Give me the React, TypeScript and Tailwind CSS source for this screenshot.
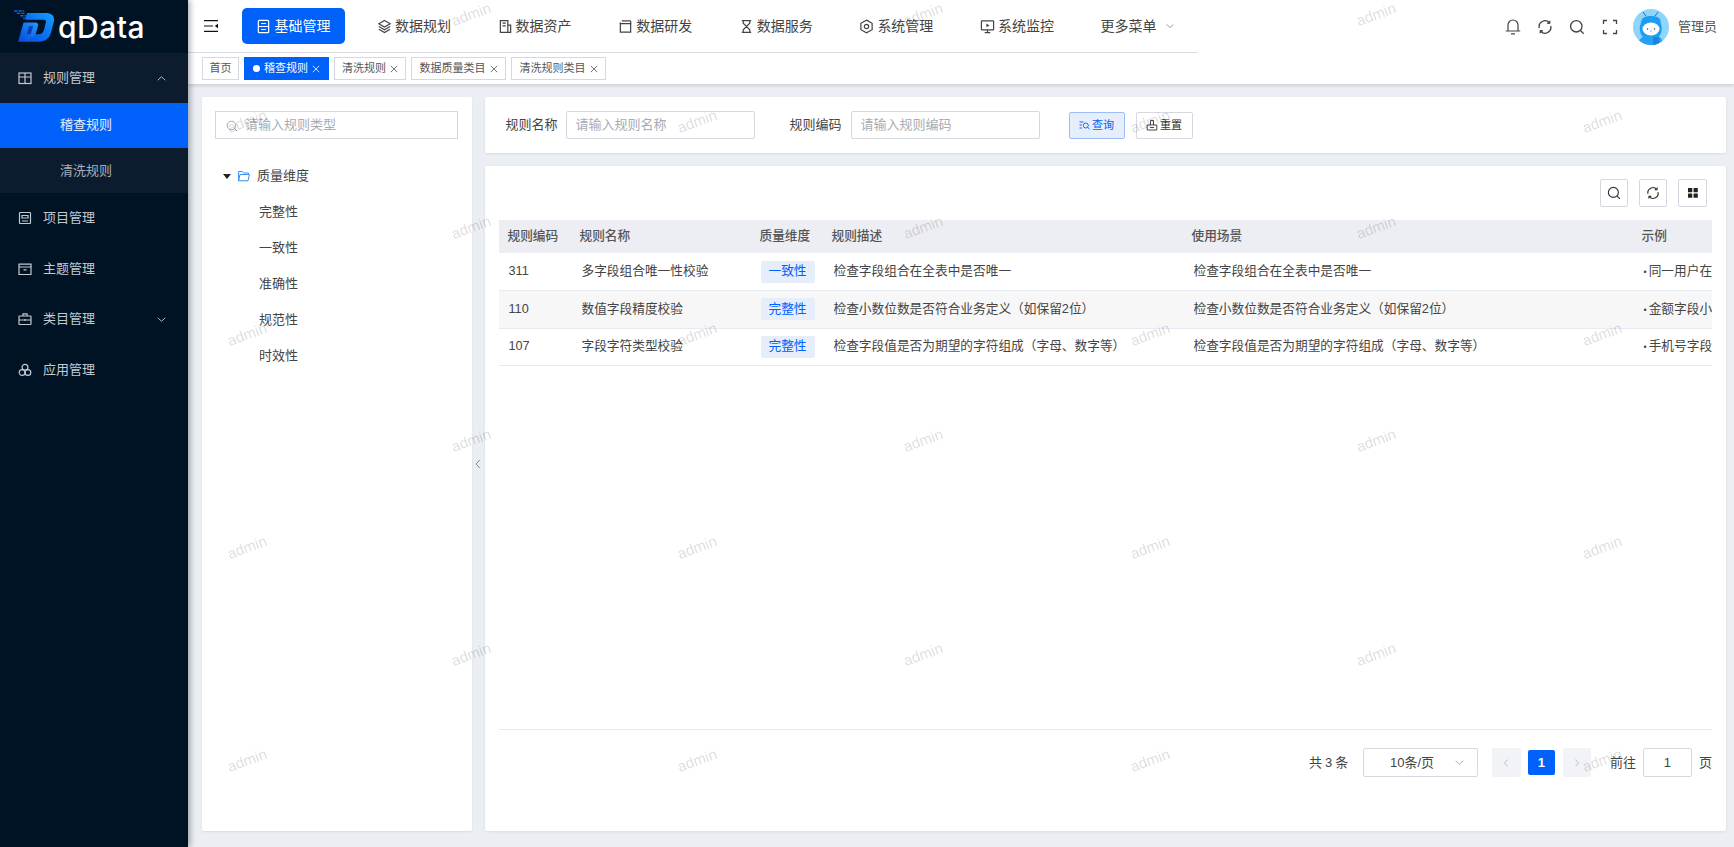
import React from "react";

type IconProps = { className?: string };
const S = ({ className, children, size = 16 }: { className?: string; children: React.ReactNode; size?: number }) => (
  <svg width={size} height={size} viewBox="0 0 16 16" fill="none" stroke="currentColor" strokeWidth="1.3" className={className}>
    {children}
  </svg>
);

const IconBase = ({ className }: IconProps) => (
  <S className={className}>
    <rect x="2.5" y="1.500" width="11" height="13" rx="1" />
    <path d="M5.500 4.800h5M2.500 8h11M5.500 11.200h5" />
  </S>
);
const IconLayers = ({ className }: IconProps) => (
  <S className={className}>
    <path d="M8 1.500 14 5 8 8.500 2 5Z" />
    <path d="M2 8l6 3.500L14 8M2 11l6 3.500L14 11" />
  </S>
);
const IconAsset = ({ className }: IconProps) => (
  <S className={className}>
    <path d="M2.500 1.800h8v12.400h-8Z" />
    <path d="M10.500 6.500h3v7.700h-3M4.800 4.500h3.500M4.800 7.300h3.500" />
  </S>
);
const IconDev = ({ className }: IconProps) => (
  <S className={className}>
    <path d="M4 2h9.500M2.500 5h11v9h-11Z" />
    <path d="M2.500 5V3.800M13.500 2v3" />
  </S>
);
const IconHourglass = ({ className }: IconProps) => (
  <S className={className}>
    <path d="M3 1.800h10M3 14.200h10M4.500 1.800v2.700l7 7v2.700M11.500 1.800v2.700l-7 7v2.700" />
  </S>
);
const IconHex = ({ className }: IconProps) => (
  <S className={className}>
    <path d="M8 1.200 14 4.600v6.800l-6 3.400-6-3.400V4.600Z" />
    <circle cx="8" cy="8" r="2.300" />
  </S>
);
const IconMonitor = ({ className }: IconProps) => (
  <S className={className}>
    <rect x="1.500" y="2" width="13" height="9.500" rx=".6" />
    <path d="M8 11.500V14.500M5 14.500h6" />
    <path d="M6.800 4.700 10.200 6.800 6.800 8.900Z" fill="currentColor" stroke="none" />
  </S>
);
const IconRefresh = ({ className, size = 16 }: IconProps & { size?: number }) => (
  <S className={className} size={size}>
    <path d="M2.300 9A5.800 5.800 0 0 1 12.300 3.800" />
    <path d="M13.700 7A5.800 5.800 0 0 1 3.700 12.200" />
    <path d="M12.800 1.700 12.600 4.300 10 4.100M3.200 14.300 3.400 11.700 6 11.900" />
  </S>
);
const IconSearch = ({ className, size = 16 }: IconProps & { size?: number }) => (
  <S className={className} size={size}>
    <circle cx="7.300" cy="7.300" r="5.700" />
    <path d="m11.500 11.500 3.200 3.200" />
  </S>
);
const Chevron = ({ className, dir = "down" }: IconProps & { dir?: "down" | "up" | "left" | "right" }) => {
  const d = { down: "M2.500 5.500 8 10.500l5.500-5", up: "M2.500 10.500 8 5.500l5.500 5", left: "M10.500 2.500 5.500 8l5 5.500", right: "M5.500 2.500 10.500 8l-5 5.500" }[dir];
  return <S className={className}><path d={d} /></S>;
};
const IconX = ({ className }: IconProps) => (
  <svg width="8" height="8" viewBox="0 0 8 8" fill="none" stroke="currentColor" strokeWidth=".8" className={className}>
    <path d="m.8.800 6.400 6.400M7.200.800.800 7.200" />
  </svg>
);

const Logo = () => (
  <svg width="41" height="33" viewBox="0 0 120 95" className="shrink-0">
    <defs>
      <linearGradient id="lg" x1="0" y1="1" x2="1" y2="0">
        <stop offset="0" stopColor="#0a4fe0" />
        <stop offset="0.55" stopColor="#0d78f5" />
        <stop offset="1" stopColor="#18a0ff" />
      </linearGradient>
      <linearGradient id="lg2" x1="0" y1="1" x2="1" y2="0">
        <stop offset="0" stopColor="#0646d8" />
        <stop offset="1" stopColor="#1e9cff" />
      </linearGradient>
    </defs>
    <path d="M38 8H92C112 8 121 18 116 36L108 66C103 84 90 92 72 92H46L52 70H72C80 70 85 66 87 59L93 37C95 31 92 28 86 28H33Z" fill="url(#lg)" />
    <path d="M28 36H62C70 36 72 40 70 47L64 68C61 76 57 80 50 80L46 92H12Z" fill="url(#lg2)" />
    <path d="M44 46H56L49 70H37Z" fill="#0a3fb8" />
    <path d="M0 2h30M8 9h26M18 16h18M26 23h12" stroke="#0f62e8" strokeWidth="4" strokeDasharray="10 3" />
  </svg>
);

const Avatar = () => (
  <svg width="36" height="36" viewBox="0 0 36 36" className="shrink-0">
    <clipPath id="av"><circle cx="18" cy="18" r="18" /></clipPath>
    <g clipPath="url(#av)">
      <rect width="36" height="36" fill="#8ed4fb" />
      <path d="M9 10c2-2 4-3 9-3s7 1 9 3l1.500 7c1 5-1 9-3 11H10c-2-2-4-6-3-11Z" fill="#1d9cf2" />
      <path d="M10 3l3 4M25 3l-3 4" stroke="#1d6fd0" strokeWidth="1" />
      <ellipse cx="18" cy="20" rx="8.500" ry="6.500" fill="#ffffff" />
      <circle cx="14.500" cy="20" r=".8" fill="#2a4f80" />
      <circle cx="21.500" cy="20" r=".8" fill="#2a4f80" />
      <path d="M17.300 22h1.400" stroke="#2a70d0" strokeWidth=".8" />
      <path d="M4 36c1-5 5-9 10-9h10l4 2 3 7Z" fill="#24a0f5" />
      <path d="M20 28h6v8h-6Z" fill="#1b85dc" />
    </g>
  </svg>
);

const navItems: [string, React.FC<IconProps>][] = [
  ["数据规划", IconLayers],
  ["数据资产", IconAsset],
  ["数据研发", IconDev],
  ["数据服务", IconHourglass],
  ["系统管理", IconHex],
  ["系统监控", IconMonitor],
];

const tags = [
  { t: "首页", w: "w-[37px]" },
  { t: "稽查规则", w: "w-[85px]", active: true },
  { t: "清洗规则", w: "w-[72px]" },
  { t: "数据质量类目", w: "w-[95px]" },
  { t: "清洗规则类目", w: "w-[95px]" },
];

const SideIcon = ({ d }: { d: React.ReactNode }) => (
  <svg width="14" height="14" viewBox="0 0 14 14" fill="none" stroke="currentColor" strokeWidth="1.200" className="shrink-0">
    {d}
  </svg>
);

const sideItems: [string, React.ReactNode, string, boolean][] = [
  ["项目管理", <><rect x="1.500" y="1.500" width="11" height="11" rx=".5" /><path d="M4 4.500h6v2.500H4ZM4 10h6" /></>, "h-[50px]", false],
  ["主题管理", <><path d="M1 5v7.500h12V5Z" /><path d="M1 5V2.200h12V5M5.500 7.800h3" /></>, "h-[52px]", false],
  ["类目管理", <><rect x="1" y="4" width="12" height="8.500" rx=".5" /><path d="M5 4V1.800h4V4M1 8h12M7 7v2" /></>, "h-[48px]", true],
  ["应用管理", <><circle cx="7" cy="4.300" r="2.900" /><circle cx="4.100" cy="9.500" r="2.900" /><circle cx="9.900" cy="9.500" r="2.900" /></>, "h-[54px]", false],
];

const rows = [
  ["311", "多字段组合唯一性校验", "一致性", "检查字段组合在全表中是否唯一", "检查字段组合在全表中是否唯一", "同一用户在同一时间"],
  ["110", "数值字段精度校验", "完整性", "检查小数位数是否符合业务定义（如保留2位）", "检查小数位数是否符合业务定义（如保留2位）", "金额字段小数位数"],
  ["107", "字段字符类型校验", "完整性", "检查字段值是否为期望的字符组成（字母、数字等）", "检查字段值是否为期望的字符组成（字母、数字等）", "手机号字段只能为"],
];

const Watermarks = () => {
  const cells: { x: number; y: number }[] = [];
  for (let r = 0; r < 8; r++) {
    const y = 14 + r * 106.6;
    const xs = r % 2 === 0 ? [471, 923, 1376] : [247, 697, 1150, 1602];
    xs.forEach((x) => cells.push({ x, y }));
  }
  return (
    <div className="pointer-events-none absolute inset-0 z-10 overflow-hidden">
      {cells.map((c, i) => (
        <span
          key={i}
          className="absolute -translate-x-1/2 -translate-y-1/2 -rotate-20 text-[15px] leading-none text-[#000000]/15"
          style={{ left: c.x, top: c.y }}
        >
          admin
        </span>
      ))}
    </div>
  );
};

export default function App() {
  return (
    <div className="relative flex h-[847px] w-[1734px] overflow-hidden bg-[#ebeef2] font-['Liberation_Sans','Noto_Sans_CJK_SC',sans-serif] text-[13px] text-[#444]">
      {/* Sidebar */}
      <aside className="z-20 flex w-[188px] shrink-0 flex-col bg-[#001324] text-[#c3c9d0] shadow-[2px_0_6px_rgba(0,21,41,0.35)]">
        <div className="flex h-[53px] shrink-0 items-center gap-[3px] pl-[14px]">
          <Logo />
          <span className="font-['Inter',sans-serif] text-[30px] font-medium leading-none tracking-[0.500px] text-white">qData</span>
        </div>
        <div className="bg-[#0c1c2e]">
          <div className="flex h-[50px] items-center pl-[18px] pr-[21px]">
            <SideIcon d={<><rect x="1" y="2" width="12" height="10.500" /><path d="M1 6h12M7 2v10.500" /></>} />
            <span className="ml-[11px] flex-1">规则管理</span>
            <Chevron dir="up" className="h-[11px] w-[11px]" />
          </div>
          <div className="flex h-[45px] items-center bg-[#0060fa] pb-[1px] pl-[60px] text-white/90">稽查规则</div>
          <div className="flex h-[45px] items-center pl-[60px] text-[#a8b1bb]">清洗规则</div>
        </div>
        <div>
          {sideItems.map(([t, d, h, ch]) => (
            <div key={t} className={`flex ${h} items-center pl-[18px] pr-[21px]`}>
              <SideIcon d={d} />
              <span className="ml-[11px] flex-1">{t}</span>
              {ch && <Chevron dir="down" className="h-[11px] w-[11px]" />}
            </div>
          ))}
        </div>
      </aside>

      {/* Main */}
      <div className="flex min-w-0 flex-1 flex-col">
        <header className="flex h-[53px] shrink-0 items-center bg-white pr-[17px]">
          <div className="flex h-full w-[1010px] items-center border-b border-[#dcdfe6] pl-[16px]">
            <svg width="14" height="12" viewBox="0 0 14 12" className="shrink-0 text-[#111]" fill="currentColor">
              <path d="M0 0h14v1.200H0ZM0 5.400h9v1.200H0ZM0 10.800h14V12H0ZM14 3.800v4.400L10.800 6Z" />
            </svg>
            <button className="ml-[24px] flex h-[36px] w-[103px] items-center justify-center gap-[4px] rounded-[5px] bg-[#0060fa] pr-[1px] text-[14px] text-white">
              <IconBase className="h-[15px] w-[15px]" />
              基础管理
            </button>
            <div className="ml-[32px] flex items-center text-[14px] text-[#444]">
              {navItems.map(([t, I]) => (
                <div key={t} className="flex w-[120.600px] items-center gap-[3px]">
                  <I className="h-[15px] w-[15px]" />
                  {t}
                </div>
              ))}
              <div className="flex items-center gap-[8px]">
                更多菜单
                <Chevron dir="down" className="h-[10px] w-[10px] text-[#888]" />
              </div>
            </div>
          </div>
          <div className="ml-auto flex items-center text-[#444]">
            <svg width="16" height="17" viewBox="0 0 16 17" fill="none" stroke="currentColor" strokeWidth="1.200">
              <path d="M3 12.500V7a5 5 0 0 1 10 0v5.500M.8 13h14.400M6 15.800h4" />
            </svg>
            <IconRefresh className="ml-[16px]" />
            <IconSearch className="ml-[16px]" />
            <svg width="16" height="16" viewBox="0 0 16 16" fill="none" stroke="currentColor" strokeWidth="1.300" className="ml-[17px]">
              <path d="M1.500 5V1.500H5M11 1.500h3.500V5M14.500 11v3.500H11M5 14.500H1.500V11" />
            </svg>
            <span className="ml-[15px]"><Avatar /></span>
            <span className="ml-[9px] text-[13px] text-[#555]">管理员</span>
          </div>
        </header>

        <div className="z-[1] flex h-[31px] shrink-0 items-center gap-[5px] bg-white pl-[14px] shadow-[0_2px_3px_rgba(0,0,0,0.12)]">
          {tags.map((t) => (
            <div
              key={t.t}
              className={`flex h-[23px] ${t.w} items-center justify-center gap-[3px] border text-[11px] ${t.active ? "border-[#0060fa] bg-[#0060fa] text-white" : "border-[#d5d8e0] bg-white text-[#555]"}`}
            >
              {t.active && <span className="mr-[1px] h-[7px] w-[7px] rounded-full bg-white" />}
              {t.t}
              {t.t !== "首页" && <IconX className="ml-[1px]" />}
            </div>
          ))}
        </div>

        <main className="flex min-h-0 flex-1 pb-[16px] pl-[14px] pr-[8px] pt-[13px]">
          {/* Tree */}
          <section className="w-[270px] shrink-0 rounded-[2px] bg-white px-[13px] pt-[14px] shadow-[0_1px_2px_rgba(0,0,0,0.08)]">
            <div className="relative">
              <IconSearch size={12} className="absolute left-[11px] top-[9px] text-[#a0a4ad]" />
              <input
                placeholder="请输入规则类型"
                className="h-[28px] w-[243px] border border-[#d5d8e0] pb-[2px] pl-[29px] text-[13px] outline-none placeholder:text-[#a8abb2]"
              />
            </div>
            <div className="mt-[23px] flex h-[28px] items-center pl-[8px]">
              <span className="h-0 w-0 border-x-[4px] border-t-[5px] border-x-transparent border-t-[#222]" />
              <svg width="12" height="12" viewBox="0 0 12 12" fill="none" stroke="#3a8ef0" strokeWidth="1" className="ml-[7px] shrink-0">
                <path d="M.6 10.800V1.500h3.800l1.200 1.500h4.800v1.500M.6 10.800 2 4.500h9.400l-1.400 6.300Z" />
              </svg>
              <span className="ml-[7px]">质量维度</span>
            </div>
            <div className="pl-[44px] pt-[4px]">
              {["完整性", "一致性", "准确性", "规范性", "时效性"].map((t) => (
                <div key={t} className="flex h-[36px] items-center">{t}</div>
              ))}
            </div>
          </section>

          <div className="flex w-[12.500px] shrink-0 items-center justify-center">
            <Chevron dir="left" className="h-[12px] w-[12px] text-[#888]" />
          </div>

          <div className="flex min-w-0 flex-1 flex-col gap-[13px]">
            {/* Filter */}
            <section className="flex h-[56px] shrink-0 items-center rounded-[2px] bg-white pl-[21px] shadow-[0_1px_3px_rgba(0,0,0,0.08)]">
              <span className="w-[60px]">规则名称</span>
              <input placeholder="请输入规则名称" className="h-[28px] w-[189px] rounded-[2px] border border-[#d5d8e0] pb-[1px] pl-[9px] text-[13px] outline-none placeholder:text-[#a8abb2]" />
              <span className="ml-[35px] w-[61px]">规则编码</span>
              <input placeholder="请输入规则编码" className="h-[28px] w-[189px] rounded-[2px] border border-[#d5d8e0] pb-[1px] pl-[9px] text-[13px] outline-none placeholder:text-[#a8abb2]" />
              <button className="ml-[29px] flex h-[27px] w-[56px] items-center justify-center gap-[2px] rounded-[2px] border border-[#9dbdf8] bg-[#e6eefc] text-[11px] text-[#0060fa]">
                <svg width="11" height="11" viewBox="0 0 11 11" fill="none" stroke="currentColor" strokeWidth=".9">
                  <path d="M.5 2h4M.5 5h2.500M.5 8h2.500" /><circle cx="6.800" cy="5.500" r="2.500" /><path d="m8.600 7.300 1.900 1.900" />
                </svg>
                查询
              </button>
              <button className="ml-[11px] flex h-[27px] w-[57px] items-center justify-center gap-[2px] rounded-[2px] border border-[#d5d8e0] bg-white text-[11px] text-[#333]">
                <svg width="12" height="12" viewBox="0 0 12 12" fill="none" stroke="currentColor" strokeWidth=".9">
                  <path d="M1.200 6h9.600v5H1.200ZM4.500 6V1.500h3V6M4 8.500h4" />
                </svg>
                重置
              </button>
            </section>

            {/* Table card */}
            <section className="flex min-h-0 flex-1 flex-col rounded-[2px] bg-white pl-[14px] pr-[14px] pt-[13px] shadow-[0_1px_3px_rgba(0,0,0,0.08)]">
              <div className="flex justify-end gap-[11px] pr-[5px] text-[#333]">
                <button className="flex h-[28px] w-[28px] items-center justify-center rounded-[2px] border border-[#d5d8e0]"><IconSearch size={14} /></button>
                <button className="flex h-[28px] w-[28px] items-center justify-center rounded-[2px] border border-[#d5d8e0]"><IconRefresh size={14} /></button>
                <button className="flex h-[28px] w-[29px] items-center justify-center rounded-[2px] border border-[#d5d8e0]">
                  <svg width="10" height="10" viewBox="0 0 11 11" fill="#222">
                    <rect width="4.700" height="4.700" rx=".4" /><rect x="6.100" width="4.700" height="4.700" rx=".4" /><rect y="6.100" width="4.700" height="4.700" rx=".4" /><rect x="6.100" y="6.100" width="4.700" height="4.700" rx=".4" />
                  </svg>
                </button>
              </div>
              <div className="mt-[13px] flex-1 overflow-hidden">
                <table className="w-[1213px] table-fixed border-collapse text-left text-[12.700px]">
                  <colgroup>
                    <col className="w-[72px]" />
                    <col className="w-[180px]" />
                    <col className="w-[72px]" />
                    <col className="w-[360px]" />
                    <col className="w-[450px]" />
                    <col className="w-[79px]" />
                  </colgroup>
                  <thead>
                    <tr className="h-[33px] bg-[#edeef3] text-[#555]">
                      {["规则编码", "规则名称", "质量维度", "规则描述", "使用场景", "示例"].map((h) => (
                        <th key={h} className="overflow-hidden whitespace-nowrap pl-[9px] font-medium">{h}</th>
                      ))}
                    </tr>
                  </thead>
                  <tbody>
                    {rows.map((r, i) => (
                      <tr key={r[0]} className={`h-[37.600px] border-b border-[#e6eaf2] ${i === 1 ? "bg-[#f7f7f8]" : ""}`}>
                        <td className="pl-[10px]">{r[0]}</td>
                        <td className="pl-[11px]">{r[1]}</td>
                        <td className="pl-[10px]">
                          <span className="flex h-[22px] w-[54px] items-center justify-center rounded-[2px] bg-[#e6eefc] text-[#0060fa]">{r[2]}</span>
                        </td>
                        <td className="whitespace-nowrap pl-[11px]">{r[3]}</td>
                        <td className="whitespace-nowrap pl-[11px]">{r[4]}</td>
                        <td className="overflow-hidden whitespace-nowrap pl-[11px]">
                          <span className="mr-[2px] text-[9px]">•</span>
                          {r[5]}
                        </td>
                      </tr>
                    ))}
                  </tbody>
                </table>
              </div>
              <div className="flex h-[102px] shrink-0 items-start justify-end border-t border-[#e6e8ee] pt-[18px]">
                <div className="flex items-center">
                  <span className="tracking-[-0.300px]">共 3 条</span>
                  <div className="relative ml-[15px] flex h-[29px] w-[115px] items-center rounded-[2px] border border-[#d5d8e0] pl-[26px] text-[#444]">
                    10条/页
                    <Chevron dir="down" className="absolute right-[12px] top-[8px] h-[11px] w-[11px] text-[#aaa]" />
                  </div>
                  <button className="ml-[14px] flex h-[29px] w-[29px] items-center justify-center rounded-[2px] bg-[#f1f3f7] text-[#b0b4bc]"><Chevron dir="left" className="h-[10px] w-[10px]" /></button>
                  <span className="ml-[7px] flex h-[25px] w-[27px] items-center justify-center rounded-[2px] bg-[#0060fa] font-bold text-white">1</span>
                  <button className="ml-[8px] flex h-[29px] w-[28px] items-center justify-center rounded-[2px] bg-[#f1f3f7] text-[#b0b4bc]"><Chevron dir="right" className="h-[10px] w-[10px]" /></button>
                  <span className="ml-[19px]">前往</span>
                  <span className="ml-[7px] flex h-[29px] w-[49px] items-center justify-center rounded-[2px] border border-[#d5d8e0]">1</span>
                  <span className="ml-[7px]">页</span>
                </div>
              </div>
            </section>
          </div>
        </main>
      </div>
      <Watermarks />
    </div>
  );
}
